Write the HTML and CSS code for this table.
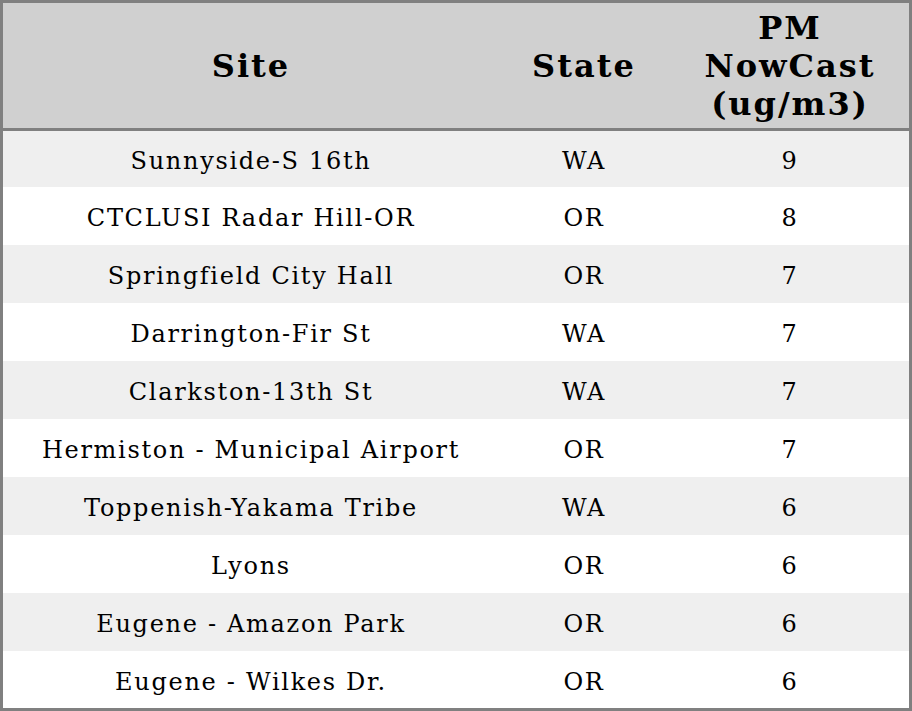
FILE: index.html
```html
<!DOCTYPE html>
<html>
<head>
<meta charset="utf-8">
<link rel="stylesheet" href="styles.css">
</head>
<body>
<table class="aq">
  <colgroup>
    <col class="c-site">
    <col class="c-state">
    <col class="c-pm">
  </colgroup>
  <thead>
    <tr><th>Site</th><th>State</th><th>PM<br>NowCast<br>(ug/m3)</th></tr>
  </thead>
  <tbody>
    <tr><td>Sunnyside-S 16th</td><td>WA</td><td>9</td></tr>
    <tr><td>CTCLUSI Radar Hill-OR</td><td>OR</td><td>8</td></tr>
    <tr><td>Springfield City Hall</td><td>OR</td><td>7</td></tr>
    <tr><td>Darrington-Fir St</td><td>WA</td><td>7</td></tr>
    <tr><td>Clarkston-13th St</td><td>WA</td><td>7</td></tr>
    <tr><td>Hermiston - Municipal Airport</td><td>OR</td><td>7</td></tr>
    <tr><td>Toppenish-Yakama Tribe</td><td>WA</td><td>6</td></tr>
    <tr><td>Lyons</td><td>OR</td><td>6</td></tr>
    <tr><td>Eugene - Amazon Park</td><td>OR</td><td>6</td></tr>
    <tr><td>Eugene - Wilkes Dr.</td><td>OR</td><td>6</td></tr>
  </tbody>
</table>
</body>
</html>
```
FILE: styles.css
```css
html, body {
  margin: 0;
  padding: 0;
  background: #ffffff;
}
.aq {
  width: 912px;
  table-layout: fixed;
  border-collapse: separate;
  border-spacing: 0;
  border: 3px solid #808080;
  box-sizing: border-box;
  font-family: "DejaVu Serif", serif;
  color: #000;
}
.c-site { width: 494px; }
.c-state { width: 172px; }
.c-pm { width: 240px; }
.aq th {
  box-sizing: border-box;
  height: 128px;
  padding: 0 0 0 2px;
  background: #d0d0d0;
  border-bottom: 3px solid #808080;
  font-size: 32px;
  font-weight: bold;
  letter-spacing: 2px;
  text-align: center;
  vertical-align: middle;
}
.aq td {
  box-sizing: border-box;
  height: 58px;
  padding: 4px 0 0 2px;
  font-size: 24px;
  letter-spacing: 1.7px;
  text-align: center;
  vertical-align: middle;
}
.aq tbody tr:first-child td { height: 56px; }
.aq tbody tr:last-child td { height: 57px; }
.aq tbody tr:nth-child(odd) td {
  background: #efefef;
}
```
